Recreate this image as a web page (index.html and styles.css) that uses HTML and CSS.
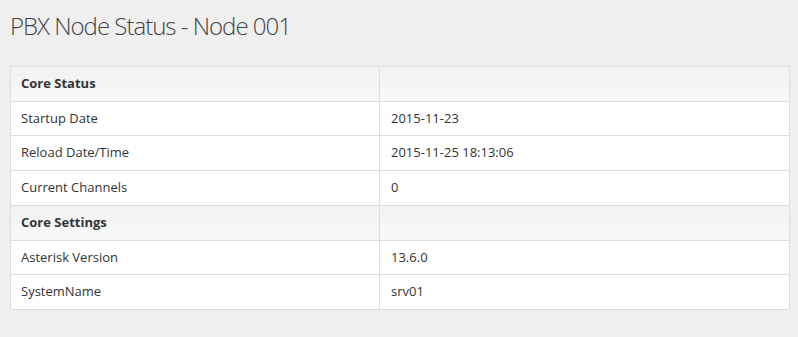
FILE: index.html
```html
<!DOCTYPE html>
<html lang="en">

<head>
    <meta charset="UTF-8">
    <meta name="viewport" content="width=device-width, initial-scale=1.0">
    <title>PBX Node Status</title>
    <link rel="stylesheet" href="styles.css">
</head>

<body>
    <div class="page">
        <h1 class="page-title">PBX Node Status - Node 001</h1>

        <table class="status-table">
            <tbody>
                <tr class="section-row">
                    <th class="col-name">Core Status</th>
                    <th></th>
                </tr>
                <tr>
                    <td>Startup Date</td>
                    <td>2015-11-23</td>
                </tr>
                <tr>
                    <td>Reload Date/Time</td>
                    <td>2015-11-25 18:13:06</td>
                </tr>
                <tr>
                    <td>Current Channels</td>
                    <td>0</td>
                </tr>
                <tr class="section-row">
                    <th>Core Settings</th>
                    <th></th>
                </tr>
                <tr>
                    <td>Asterisk Version</td>
                    <td>13.6.0</td>
                </tr>
                <tr>
                    <td>SystemName</td>
                    <td>srv01</td>
                </tr>
            </tbody>
        </table>
    </div>
</body>

</html>
```

FILE: styles.css
```css
* {
    margin: 0;
    padding: 0;
    box-sizing: border-box;
}

body {
    background-color: #efefef;
    font-family: "Open Sans", "Liberation Sans", sans-serif;
    font-size: 13px;
    color: #333;
}

.page {
    padding: 10px 8px 0 10px;
}

.page-title {
    font-weight: 300;
    font-size: 24px;
    letter-spacing: -1px;
    line-height: 32px;
    color: #444;
    margin-bottom: 24px;
}

.status-table {
    width: 100%;
    border-collapse: collapse;
    background-color: #fff;
    border: 1px solid #ddd;
}

.status-table th,
.status-table td {
    border: 1px solid #ddd;
    padding: 8px 10px;
    line-height: 17.7px;
    text-align: left;
}

.status-table td + td,
.status-table th + th {
    padding-left: 11px;
}

.col-name {
    width: 369px;
}

.section-row th {
    font-weight: 700;
    background: linear-gradient(#f2f2f2, #f8f8f8);
}
```
